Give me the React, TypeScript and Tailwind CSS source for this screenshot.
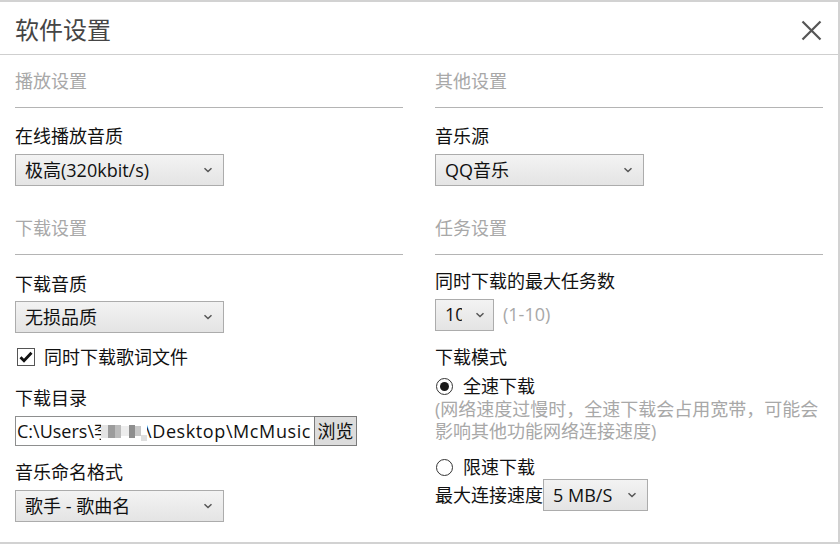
import type { ReactNode } from "react";

const Chevron = () => (
  <svg width="10" height="6" viewBox="0 0 10 6" className="shrink-0">
    <path d="M1.5 1.2 5 4.5l3.5-3.3" fill="none" stroke="#555" strokeWidth="1.5" />
  </svg>
);

const Select = ({
  value,
  w,
  pr = "pr-[10px]",
  textW = "",
}: {
  value: string;
  w: string;
  pr?: string;
  textW?: string;
}) => (
  <div
    className={`${w} ${pr} h-[32px] flex items-center justify-between pl-[9px] border border-[#acacac] bg-linear-to-b from-[#f3f3f3] to-[#e4e4e4] text-[18px] text-[#111] overflow-hidden whitespace-nowrap`}
  >
    <span className={`${textW} overflow-hidden`}>{value}</span>
    <Chevron />
  </div>
);

const SectionHeader = ({ children, mt = "" }: { children: ReactNode; mt?: string }) => (
  <div className={`${mt} h-[53px] flex items-center text-[18px] text-[#a8a8a8] border-b border-[#b4b4b4]`}>
    {children}
  </div>
);

const Label = ({ children, mt }: { children: ReactNode; mt: string }) => (
  <div className={`${mt} h-[28px] flex items-center text-[18px] text-[#111]`}>{children}</div>
);

const Radio = ({ checked, label, mt }: { checked?: boolean; label: string; mt: string }) => (
  <div className={`${mt} h-[24px] flex items-center text-[18px] text-[#111]`}>
    <span className="ml-[1px] w-[17px] h-[17px] rounded-full border border-[#333] flex items-center justify-center">
      {checked && <span className="w-[9px] h-[9px] rounded-full bg-[#1a1a1a]" />}
    </span>
    <span className="ml-[10px]">{label}</span>
  </div>
);

export default function App() {
  return (
    <div className="w-[840px] h-[544px] bg-white border-t-2 border-r-2 border-b-2 border-[#d2d2d2] font-['Open_Sans','Noto_Sans_CJK_SC',sans-serif] overflow-hidden">
      {/* title bar */}
      <div className="h-[53px] flex items-center justify-between pl-[15px] pr-[16px] pt-[4px] border-b border-[#cfcfcf]">
        <span className="text-[24px] text-[#454545]">软件设置</span>
        <svg width="21" height="21" viewBox="0 0 21 21">
          <path d="M1.5 1.5l18 18M19.5 1.5l-18 18" stroke="#555" strokeWidth="2.2" />
        </svg>
      </div>

      <div className="flex gap-[32px] pl-[15px]">
        {/* left column */}
        <div className="w-[388px] flex flex-col">
          <SectionHeader>播放设置</SectionHeader>
          <Label mt="mt-[14px]">在线播放音质</Label>
          <div className="mt-[4px]">
            <Select value="极高(320kbit/s)" w="w-[209px]" />
          </div>

          <SectionHeader mt="mt-[16px]">下载设置</SectionHeader>
          <Label mt="mt-[15px]">下载音质</Label>
          <div className="mt-[3px]">
            <Select value="无损品质" w="w-[209px]" />
          </div>
          <div className="mt-[11px] h-[26px] flex items-center text-[18px] text-[#111]">
            <span className="ml-[2px] w-[18px] h-[18px] border border-[#555] bg-white flex items-center justify-center">
              <svg width="14" height="12" viewBox="0 0 14 12">
                <path d="M1.5 6.2 5 9.8 12.5 1.8" fill="none" stroke="#111" strokeWidth="2.8" />
              </svg>
            </span>
            <span className="ml-[9px]">同时下载歌词文件</span>
          </div>
          <Label mt="mt-[14px]">下载目录</Label>
          <div className="mt-[4px] h-[30px] flex">
            <div className="w-[299px] h-full border border-[#8e8f8f] border-r-0 bg-white flex items-center pl-[1px] text-[18px] text-[#111] whitespace-nowrap overflow-hidden">
              <span>C:\Users\</span>
              <span className="relative inline-flex items-center">
                <span>李</span>
                {/* mosaic over the user name */}
                <span className="absolute left-[7px] top-0 bottom-0 w-[46px] bg-white flex items-center">
                  <span className="w-[7px] h-[13px] bg-[#e4e4e4]" />
                  <span className="w-[7px] h-[13px] bg-[#9c9c9c]" />
                  <span className="w-[6px] h-[13px] bg-[#bcbcbc]" />
                  <span className="w-[8px] h-[10px] bg-[#ededed]" />
                  <span className="w-[6px] h-[13px] bg-[#8e8e8e]" />
                  <span className="w-[6px] h-[10px] bg-[#c8c8c8]" />
                  <span className="w-[6px] h-[6px] bg-[#dedede] self-end mb-[4px]" />
                </span>
                <span className="w-[33px]" />
              </span>
              <span className="tracking-[0.6px]">\Desktop\McMusic</span>
            </div>
            <div className="w-[43px] h-full border border-[#7a7a7a] bg-[#dcdcdc] flex items-center justify-center text-[18px] text-[#111]">
              浏览
            </div>
          </div>
          <Label mt="mt-[12px]">音乐命名格式</Label>
          <div className="mt-[4px]">
            <Select value="歌手 - 歌曲名" w="w-[209px]" />
          </div>
        </div>

        {/* right column */}
        <div className="w-[388px] flex flex-col">
          <SectionHeader>其他设置</SectionHeader>
          <Label mt="mt-[14px]">音乐源</Label>
          <div className="mt-[4px]">
            <Select value="QQ音乐" w="w-[209px]" />
          </div>

          <SectionHeader mt="mt-[16px]">任务设置</SectionHeader>
          <Label mt="mt-[12px]">同时下载的最大任务数</Label>
          <div className="mt-[4px] h-[31px] flex items-center">
            <Select value="10" w="w-[59px]" pr="pr-[8px]" textW="w-[17px]" />
            <span className="ml-[9px] text-[18px] text-[#a8a8a8]">(1-10)</span>
          </div>
          <Label mt="mt-[13px]">下载模式</Label>
          <Radio checked label="全速下载" mt="mt-[3px]" />
          <div className="text-[18px] leading-[22px] text-[#a8a8a8]">
            (网络速度过慢时，全速下载会占用宽带，可能会
            <br />
            影响其他功能网络连接速度)
          </div>
          <Radio label="限速下载" mt="mt-[13px]" />
          <div className="h-[32px] flex items-center text-[18px] text-[#111]">
            <span>最大连接速度</span>
            <Select value="5 MB/S" w="w-[105px]" />
          </div>
        </div>
      </div>
    </div>
  );
}
